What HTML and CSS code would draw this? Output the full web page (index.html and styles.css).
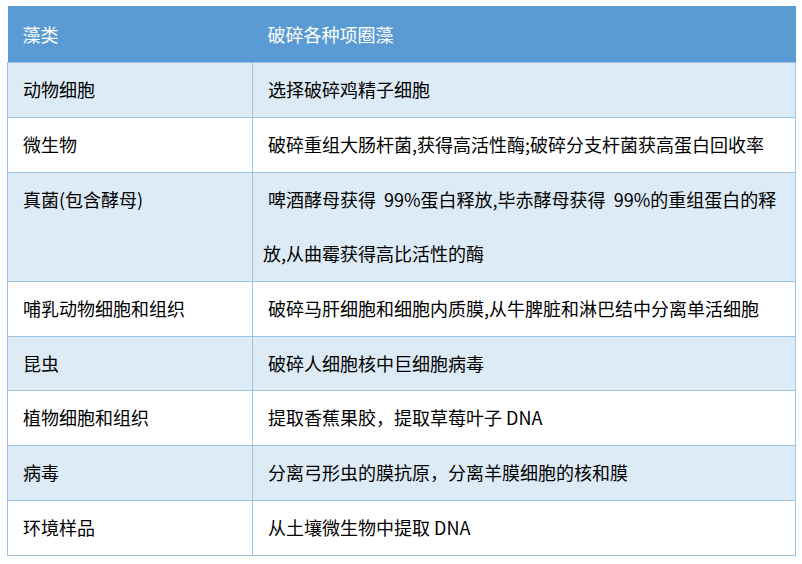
FILE: index.html
```html
<!DOCTYPE html>
<html lang="zh">
<head>
<meta charset="utf-8">
<link rel="stylesheet" href="styles.css">
</head>
<body>
<table class="data">
  <thead>
    <tr><th class="c1">藻类</th><th class="c2">破碎各种项圈藻</th></tr>
  </thead>
  <tbody>
    <tr class="alt"><td class="c1">动物细胞</td><td class="c2">选择破碎鸡精子细胞</td></tr>
    <tr><td class="c1">微生物</td><td class="c2">破碎重组大肠杆菌,获得高活性酶;破碎分支杆菌获高蛋白回收率</td></tr>
    <tr class="alt"><td class="c1">真菌(包含酵母)</td><td class="c2 wrap">啤酒酵母获得&nbsp;&nbsp;99%蛋白释放,毕赤酵母获得&nbsp;&nbsp;99%的重组蛋白的释放,从曲霉获得高比活性的酶</td></tr>
    <tr><td class="c1">哺乳动物细胞和组织</td><td class="c2">破碎马肝细胞和细胞内质膜,从牛脾脏和淋巴结中分离单活细胞</td></tr>
    <tr class="alt"><td class="c1">昆虫</td><td class="c2">破碎人细胞核中巨细胞病毒</td></tr>
    <tr><td class="c1">植物细胞和组织</td><td class="c2">提取香蕉果胶，提取草莓叶子 DNA</td></tr>
    <tr class="alt"><td class="c1">病毒</td><td class="c2">分离弓形虫的膜抗原，分离羊膜细胞的核和膜</td></tr>
    <tr><td class="c1">环境样品</td><td class="c2">从土壤微生物中提取 DNA</td></tr>
  </tbody>
</table>
</body>
</html>
```
FILE: styles.css
```css
html, body {
  margin: 0;
  padding: 0;
  background: #ffffff;
}
body {
  font-family: "Noto Sans CJK SC", "Noto Sans", sans-serif;
  font-size: 18px;
  color: #000000;
}
.data {
  margin: 6px 0 0 7px;
  width: 789px;
  border-collapse: collapse;
  table-layout: fixed;
}
.data th, .data td {
  padding: 0 0 0 15px;
  text-align: left;
  vertical-align: top;
  line-height: 53.9px;
  font-weight: normal;
}
.data th {
  background: #5b9bd5;
  color: #ffffff;
  height: 56px;
  line-height: 56px;
  border: 0;
}
.data td {
  border: 1px solid #9dc3e6;
}
.data .c1 {
  width: 230px;
}
.data .alt td {
  background: #ddebf7;
}
.data td.wrap {
  padding-left: 10px;
  text-indent: 5px;
  padding-right: 6px;
}
```
